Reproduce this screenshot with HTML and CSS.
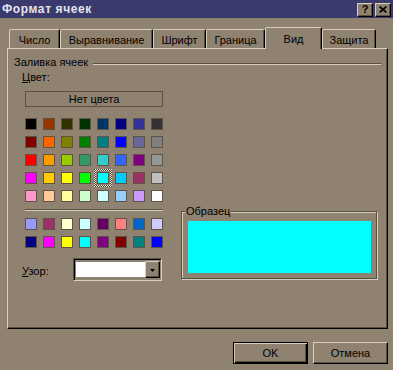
FILE: index.html
```html
<!DOCTYPE html>
<html lang="ru">
<head>
<meta charset="utf-8">
<title>Формат ячеек</title>
<link rel="stylesheet" href="styles.css">
</head>
<body>
<div class="window">
  <div class="titlebar">
    <span class="title">Формат ячеек</span>
    <div class="caption-btns">
      <span class="cbtn help">?</span>
      <span class="cbtn close"><svg width="8" height="7" viewBox="0 0 8 7"><path d="M0.6 0.5 L7.4 6.5 M7.4 0.5 L0.6 6.5" stroke="#000" stroke-width="1.7" fill="none"/></svg></span>
    </div>
  </div>

  <div class="tabs">
    <div class="tab w1">Число</div>
    <div class="tab w2">Выравнивание</div>
    <div class="tab w3">Шрифт</div>
    <div class="tab w4">Граница</div>
    <div class="tab w5 active">Вид</div>
    <div class="tab w6">Защита</div>
  </div>

  <div class="panel">
    <div class="group-head">
      <span>Заливка ячеек</span>
      <span class="etch"></span>
    </div>
    <div class="group-body">
      <div class="left">
        <div class="lbl"><u>Ц</u>вет:</div>
        <div class="nocolor">Нет цвета</div>
        <div class="swatches">
          <span class="sw" style="background:#000000"></span>
          <span class="sw" style="background:#993300"></span>
          <span class="sw" style="background:#333300"></span>
          <span class="sw" style="background:#003300"></span>
          <span class="sw" style="background:#003366"></span>
          <span class="sw" style="background:#000080"></span>
          <span class="sw" style="background:#333399"></span>
          <span class="sw" style="background:#333333"></span>

          <span class="sw" style="background:#800000"></span>
          <span class="sw" style="background:#ff6600"></span>
          <span class="sw" style="background:#808000"></span>
          <span class="sw" style="background:#008000"></span>
          <span class="sw" style="background:#008080"></span>
          <span class="sw" style="background:#0000ff"></span>
          <span class="sw" style="background:#666699"></span>
          <span class="sw" style="background:#808080"></span>

          <span class="sw" style="background:#ff0000"></span>
          <span class="sw" style="background:#ff9900"></span>
          <span class="sw" style="background:#99cc00"></span>
          <span class="sw" style="background:#339966"></span>
          <span class="sw" style="background:#33cccc"></span>
          <span class="sw" style="background:#3366ff"></span>
          <span class="sw" style="background:#800080"></span>
          <span class="sw" style="background:#969696"></span>

          <span class="sw" style="background:#ff00ff"></span>
          <span class="sw" style="background:#ffcc00"></span>
          <span class="sw" style="background:#ffff00"></span>
          <span class="sw" style="background:#00ff00"></span>
          <span class="sw sel" style="background:#00ffff"></span>
          <span class="sw" style="background:#00ccff"></span>
          <span class="sw" style="background:#993366"></span>
          <span class="sw" style="background:#c0c0c0"></span>

          <span class="sw" style="background:#ff99cc"></span>
          <span class="sw" style="background:#ffcc99"></span>
          <span class="sw" style="background:#ffff99"></span>
          <span class="sw" style="background:#ccffcc"></span>
          <span class="sw" style="background:#ccffff"></span>
          <span class="sw" style="background:#99ccff"></span>
          <span class="sw" style="background:#cc99ff"></span>
          <span class="sw" style="background:#ffffff"></span>
        </div>
        <div class="sep"></div>
        <div class="swatches">
          <span class="sw" style="background:#9999ff"></span>
          <span class="sw" style="background:#993366"></span>
          <span class="sw" style="background:#ffffcc"></span>
          <span class="sw" style="background:#ccffff"></span>
          <span class="sw" style="background:#660066"></span>
          <span class="sw" style="background:#ff8080"></span>
          <span class="sw" style="background:#0066cc"></span>
          <span class="sw" style="background:#ccccff"></span>

          <span class="sw" style="background:#000080"></span>
          <span class="sw" style="background:#ff00ff"></span>
          <span class="sw" style="background:#ffff00"></span>
          <span class="sw" style="background:#00ffff"></span>
          <span class="sw" style="background:#800080"></span>
          <span class="sw" style="background:#800000"></span>
          <span class="sw" style="background:#008080"></span>
          <span class="sw" style="background:#0000ff"></span>
        </div>
        <div class="pattern-row">
          <span class="lbl2"><u>У</u>зор:</span>
          <div class="combo">
            <div class="field"></div>
            <div class="dd"><svg width="5" height="3" viewBox="0 0 5 3"><path d="M0 0 H5 L2.5 3 Z" fill="#000"/></svg></div>
          </div>
        </div>
      </div>
      <fieldset class="sample">
        <legend>Образец</legend>
        <div class="sample-fill"></div>
      </fieldset>
    </div>
  </div>

  <div class="footer">
    <button class="btn default">OK</button>
    <button class="btn">Отмена</button>
  </div>
</div>
</body>
</html>
```

FILE: styles.css
```css
html, body {
  margin: 0;
  padding: 0;
}
body {
  width: 393px;
  height: 370px;
  overflow: hidden;
  background: #8f8271;
  font-family: "Liberation Sans", Arial, sans-serif;
  font-size: 11px;
  color: #000;
}
.window {
  width: 393px;
  height: 370px;
}

/* title bar */
.titlebar {
  height: 18px;
  background: #3b3a6e;
  display: flex;
  align-items: center;
  justify-content: space-between;
  padding: 0 2px 0 2px;
}
.title {
  color: #e4e4ec;
  font-weight: bold;
  font-size: 12px;
  line-height: 14px;
  letter-spacing: 0.6px;
}
.caption-btns {
  display: flex;
  gap: 2px;
  margin-top: 1px;
}
.cbtn {
  box-sizing: border-box;
  width: 16px;
  height: 14px;
  background: #8f8271;
  border: 1px solid;
  border-color: #d6cfbd #000 #000 #d6cfbd;
  box-shadow: inset -1px -1px 0 #5a5040;
  display: flex;
  align-items: center;
  justify-content: center;
}
.help {
  font-weight: bold;
  font-size: 11px;
  line-height: 11px;
  padding-bottom: 1px;
}

/* tabs */
.tabs {
  display: flex;
  align-items: flex-end;
  height: 21px;
  margin: 9px 0 0 9px;
}
.tab {
  box-sizing: border-box;
  height: 19px;
  border: 1px solid;
  border-bottom: none;
  border-color: #d6cfbd #000 transparent #d6cfbd;
  border-radius: 2px 2px 0 0;
  box-shadow: inset -1px 0 0 #5a5040;
  display: flex;
  justify-content: center;
  align-items: center;
  padding-top: 2px;
  background: #8f8271;
}
.tab.active {
  height: 22px;
  margin-bottom: -1px;
  position: relative;
  z-index: 1;
  padding-top: 0;
}
.w1 { width: 51px; }
.w2 { width: 93px; }
.w3 { width: 53px; }
.w4 { width: 59px; }
.w5 { width: 57px; }
.w6 { width: 54px; }

/* panel */
.panel {
  box-sizing: border-box;
  margin-left: 7px;
  width: 381px;
  height: 281px;
  border: 1px solid;
  border-color: #d6cfbd #000 #000 #d6cfbd;
  box-shadow: inset -1px -1px 0 #5a5040;
}
.group-head {
  display: flex;
  align-items: center;
  height: 13px;
  line-height: 13px;
  margin: 7px 6px 0 6px;
}
.etch {
  flex: 1;
  margin-left: 5px;
  height: 0;
  border-top: 1px solid #5a5040;
  border-bottom: 1px solid #d6cfbd;
  margin-top: 2px;
}
.group-body {
  display: flex;
  align-items: flex-start;
  padding-left: 14px;
}
.left {
  width: 141px;
}
.lbl {
  height: 13px;
  line-height: 13px;
  margin-top: 2px;
}
.nocolor {
  box-sizing: border-box;
  margin: 7px 0 0 3px;
  width: 138px;
  height: 16px;
  border: 1px solid #5a5040;
  display: flex;
  align-items: center;
  justify-content: center;
}
.swatches {
  display: grid;
  grid-template-columns: repeat(8, 12px);
  grid-auto-rows: 12px;
  gap: 6px;
  margin: 11px 0 0 3px;
}
.sep + .swatches {
  margin-top: 7px;
}
.sw {
  box-sizing: border-box;
  border: 1px solid #5e5446;
  display: block;
}
.sw.sel {
  position: relative;
}
.sw.sel::after {
  content: "";
  position: absolute;
  inset: -4px;
  padding: 2px;
  background: repeating-conic-gradient(#ece8dc 0 25%, #4a4236 0 50%) 0 0 / 2px 2px;
  -webkit-mask: linear-gradient(#000 0 0) content-box, linear-gradient(#000 0 0);
  -webkit-mask-composite: xor;
  mask-composite: exclude;
}
.sep {
  margin: 7px 0 0 3px;
  width: 138px;
  height: 0;
  border-top: 1px solid #5a5040;
  border-bottom: 1px solid #d6cfbd;
}
.pattern-row {
  display: flex;
  align-items: center;
  margin-top: 10px;
}
.lbl2 {
  width: 51px;
  padding-top: 2px;
}
.combo {
  box-sizing: border-box;
  width: 89px;
  height: 23px;
  border: 1px solid;
  border-color: #5a5040 #d6cfbd #d6cfbd #5a5040;
  box-shadow: inset 1px 1px 0 #000;
  padding: 2px 1px 2px 2px;
  display: flex;
}
.field {
  flex: 1;
  background: #fff;
  margin: 1px 0;
}
.dd {
  box-sizing: border-box;
  width: 15px;
  border: 1px solid;
  border-color: #d6cfbd #000 #000 #d6cfbd;
  box-shadow: inset -1px -1px 0 #5a5040;
  display: flex;
  align-items: center;
  justify-content: center;
  padding-top: 1px;
}
.dd svg {
  display: block;
}

/* sample */
.sample {
  margin: 136px 0 0 18px;
  padding: 3px 5px 5px 6px;
  border: 1px solid #5a5040;
  box-shadow: inset 1px 1px 0 #d6cfbd, 1px 1px 0 #d6cfbd;
  min-width: 0;
}
.sample legend {
  padding: 0 1px;
  margin-left: -3px;
  line-height: 13px;
  background: #8f8271;
}
.sample-fill {
  width: 183px;
  height: 52px;
  background: #00ffff;
}

/* footer */
.footer {
  display: flex;
  justify-content: flex-end;
  gap: 5px;
  margin-top: 13px;
  padding-right: 5px;
}
.btn {
  box-sizing: border-box;
  width: 75px;
  height: 22px;
  margin: 0;
  padding: 0;
  font: inherit;
  color: #000;
  background: #8f8271;
  border: 1px solid;
  border-color: #d6cfbd #000 #000 #d6cfbd;
  box-shadow: inset -1px -1px 0 #5a5040;
  border-radius: 0;
}
.btn.default {
  border-color: #000;
  box-shadow: inset 1px 1px 0 #d6cfbd, inset -1px -1px 0 #000, inset -2px -2px 0 #5a5040;
}
```
